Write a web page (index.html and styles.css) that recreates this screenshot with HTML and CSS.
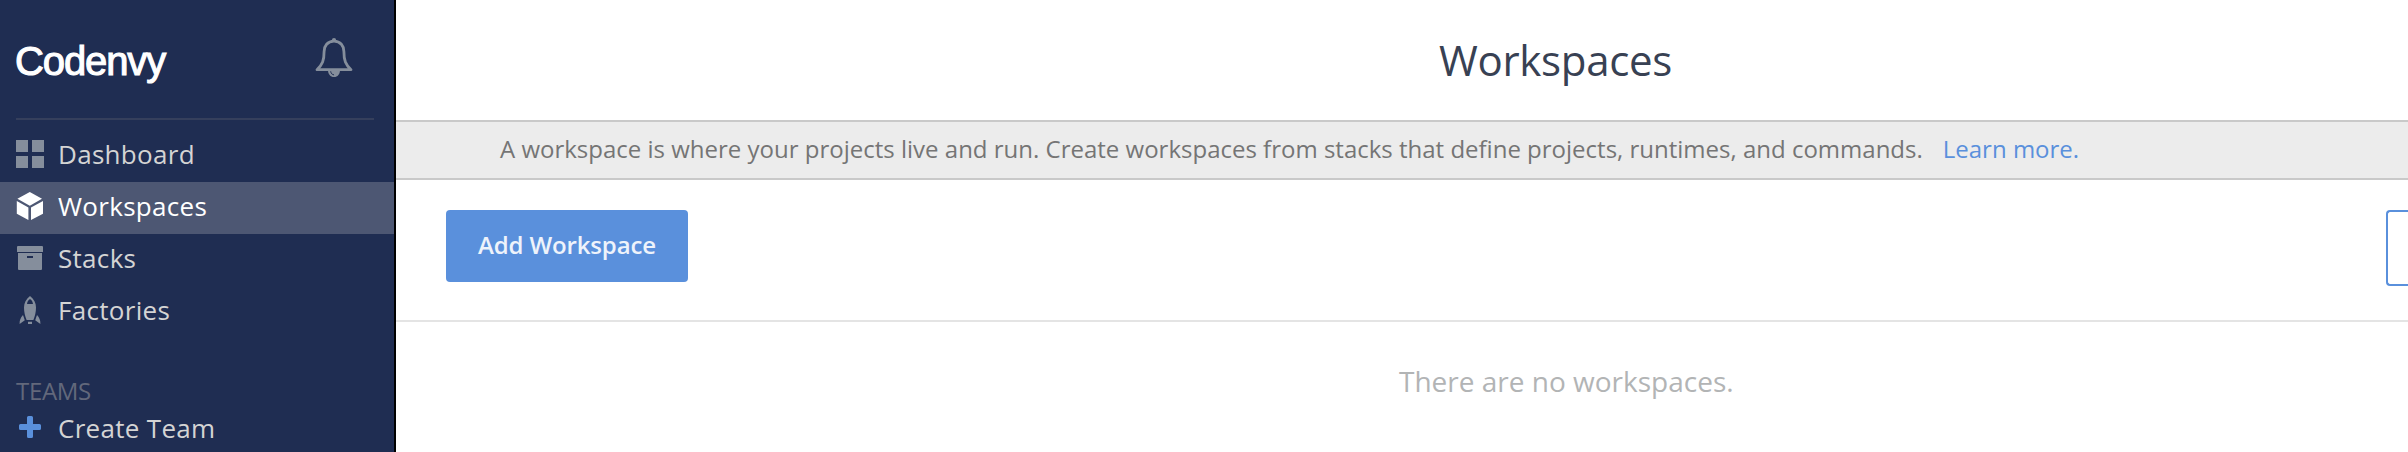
FILE: index.html
```html
<!DOCTYPE html>
<html lang="en">
<head>
<meta charset="utf-8">
<title>Workspaces</title>
<link rel="stylesheet" href="styles.css">
</head>
<body>
<div class="app">
  <aside class="sidebar">
    <div class="brand">
      <span class="logo">Codenvy</span>
      <svg class="bell" width="38" height="42" viewBox="0 0 38 42">
        <path d="M19 4.2C12.5 4.2 9.1 9 9.1 14.5C9.1 23.5 7.5 27.5 2 32.7H36C30.5 27.5 28.9 23.5 28.9 14.5C28.9 9 25.5 4.2 19 4.2Z" fill="none" stroke="currentColor" stroke-width="2.8" stroke-linejoin="round"/>
        <circle cx="19" cy="3" r="2.1" fill="currentColor"/>
        <path d="M13 33H25C25 37.3 22.6 40 19 40S13 37.3 13 33Z" fill="currentColor"/>
        <path d="M15.7 34.3C16 36.5 17 37.5 19 37.9" fill="none" stroke="#1f2d52" stroke-width="1"/>
      </svg>
    </div>
    <nav class="nav">
      <a class="item">
        <svg class="icon" width="28" height="28" viewBox="0 0 28 28"><path d="M0 0H12V12H0ZM16 0H28V12H16ZM0 16H12V28H0ZM16 16H28V28H16Z"/></svg>
        <span class="label">Dashboard</span>
      </a>
      <a class="item active">
        <svg class="icon" width="28" height="28" viewBox="0 0 28 28"><path d="M13.8 0L26 6.8L13.8 13.8L1.4 6.8ZM.8 9L12.4 15.5V28L.8 21.7ZM27 9V21.7L15 28V15.5Z"/></svg>
        <span class="label">Workspaces</span>
      </a>
      <a class="item">
        <svg class="icon" width="28" height="28" viewBox="0 0 28 28"><path d="M2 2H26Q27 2 27 3V8H1V3Q1 2 2 2Z"/><path fill-rule="evenodd" d="M2 9H26V25Q26 26 25 26H3Q2 26 2 25ZM11 12V14H17V12Z"/></svg>
        <span class="label">Stacks</span>
      </a>
      <a class="item">
        <svg class="icon" width="28" height="28" viewBox="0 0 28 28"><path fill-rule="evenodd" d="M14 0C18 3 20 7 20 11.5C20 16 19 20 17.4 24H10.6C9 20 8 16 8 11.5C8 7 10 3 14 0ZM14 3C12.2 4.2 11.3 5.7 11 8H17C16.7 5.7 15.8 4.2 14 3Z"/><path d="M12 25.8H16V28H12ZM7 19L8.8 24.3L3.6 28C3.5 24 4.5 22 7 19ZM21 19L19.2 24.3L24.4 28C24.5 24 23.5 22 21 19Z"/></svg>
        <span class="label">Factories</span>
      </a>
    </nav>
    <div class="section">TEAMS</div>
    <a class="item create">
      <svg class="icon" width="28" height="28" viewBox="0 0 28 28"><path d="M12.5 3H15.5Q17 3 17 4.5V11H23.5Q25 11 25 12.5V15.5Q25 17 23.5 17H17V23.5Q17 25 15.5 25H12.5Q11 25 11 23.5V17H4.5Q3 17 3 15.5V12.5Q3 11 4.5 11H11V4.5Q11 3 12.5 3Z"/></svg>
      <span class="label">Create Team</span>
    </a>
  </aside>
  <main class="main">
    <h1 class="title">Workspaces</h1>
    <div class="banner">
      <span class="banner-text">A workspace is where your projects live and run. Create workspaces from stacks that define projects, runtimes, and commands.</span>
      <a class="more">Learn more.</a>
    </div>
    <div class="toolbar">
      <button class="add">Add Workspace</button>
      <div class="search"></div>
    </div>
    <p class="empty">There are no workspaces.</p>
  </main>
</div>
</body>
</html>
```
FILE: styles.css
```css
* { box-sizing: border-box; }
body {
  margin: 0;
  background: #fff;
  font-family: "Open Sans", sans-serif;
}
.app {
  display: flex;
  width: 2408px;
  height: 452px;
  overflow: hidden;
}
.sidebar {
  flex: none;
  width: 396px;
  background: #1f2d52;
  border-right: 2px solid #000;
}
.brand {
  display: flex;
  justify-content: space-between;
  align-items: flex-start;
  height: 120px;
  margin: 0 20px 0 16px;
  padding: 37px 21px 0 0;
  border-bottom: 2px solid #353f5c;
}
.logo {
  margin-left: -1px;
  font-family: "Liberation Sans", Arial, sans-serif;
  font-size: 40px;
  line-height: 49px;
  letter-spacing: -1.1px;
  color: #fff;
  -webkit-text-stroke: 1.1px #fff;
}
.bell { color: #858e9c; }
.nav { padding-top: 10px; }
.item {
  display: flex;
  align-items: flex-start;
  gap: 14px;
  height: 52px;
  padding: 10px 0 0 16px;
  color: #d4d4d4;
  font-size: 26px;
  letter-spacing: 0.3px;
}
.label { line-height: 28px; }
.active { background: #4d5773; color: #fff; }
.icon { flex: none; fill: #858e9c; }
.active .icon { fill: #fff; }
.section {
  margin: 35px 0 0 16px;
  height: 36px;
  font-size: 24px;
  line-height: 36px;
  letter-spacing: -0.3px;
  color: #62687b;
}
.create { padding-top: 4px; }
.create .icon { fill: #5a90dc; }
.create .label { line-height: 30px; }
.main { flex: 1; min-width: 0; }
.title {
  margin: 0;
  height: 120px;
  padding-left: 1043px;
  font-size: 42px;
  font-weight: 400;
  line-height: 119px;
  letter-spacing: -0.3px;
  color: #384153;
}
.banner {
  display: flex;
  align-items: center;
  gap: 20px;
  height: 60px;
  padding: 0 0 3px 104px;
  background: #ececec;
  border-top: 2px solid #c9c9c9;
  border-bottom: 2px solid #c9c9c9;
  color: #757575;
  font-size: 24px;
  white-space: nowrap;
}
.more { color: #5a90dc; }
.toolbar {
  display: flex;
  align-items: flex-start;
  justify-content: space-between;
  height: 142px;
  padding: 30px 0 0 50px;
  border-bottom: 2px solid #e4e4e4;
}
.add {
  width: 242px;
  height: 72px;
  padding: 0 0 3px;
  border: 0;
  border-radius: 4px;
  background: #5a90dc;
  color: #eef3fb;
  font: 600 24px "Open Sans", sans-serif;
  letter-spacing: -0.15px;
}
.search {
  width: 22px;
  height: 76px;
  border: 2px solid #5a90dc;
  border-right: 0;
  border-radius: 4px 0 0 4px;
}
.empty {
  margin: 40px 0 0;
  padding-left: 1003px;
  font-size: 28px;
  line-height: 38px;
  color: #b2b4b5;
}
```
